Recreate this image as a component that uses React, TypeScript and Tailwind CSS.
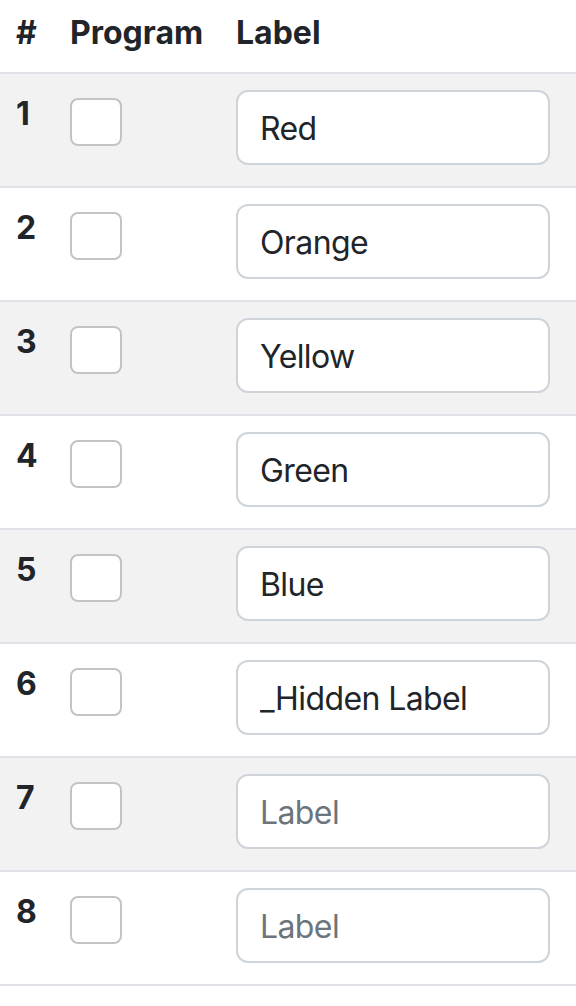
import React from "react";

const ROWS = [
  { n: 1, label: "Red" },
  { n: 2, label: "Orange" },
  { n: 3, label: "Yellow" },
  { n: 4, label: "Green" },
  { n: 5, label: "Blue" },
  { n: 6, label: "_Hidden Label" },
  { n: 7, label: "" },
  { n: 8, label: "" },
];

export default function App() {
  return (
    <div className="min-h-screen bg-white text-[#212529] text-[32px] leading-[48px]" style={{ fontFamily: "Inter, 'Liberation Sans', sans-serif" }}>
      {/* Header */}
      <div className="flex h-[74px] items-end border-b-2 border-[#dee2e6] pb-[15px] font-bold">
        <div className="w-[54px] pl-4">#</div>
        <div className="w-[166px] pl-4">Program</div>
        <div className="flex-1 pl-4">Label</div>
      </div>

      {ROWS.map((row) => (
        <div
          key={row.n}
          className={`flex h-[114px] border-b-2 border-[#dee2e6] ${row.n % 2 === 1 ? "bg-[#f2f2f2]" : "bg-white"}`}
        >
          <div className="w-[54px] pl-4 pt-4 font-bold">{row.n}</div>
          <div className="w-[166px] pl-4 pt-6">
            <input
              type="checkbox"
              className="block h-[48px] w-[52px] appearance-none rounded-[8px] border-2 border-[#c4c4c4] bg-white"
            />
          </div>
          <div className="flex-1 pl-4 pr-[26px] pt-4">
            <input
              type="text"
              defaultValue={row.label}
              placeholder="Label"
              className="block h-[75px] w-full rounded-[12px] border-2 border-[#ced4da] bg-white pl-[22px] pt-[2px] text-[32px] tracking-[-0.6px] text-[#212529] outline-none placeholder:text-[#6c757d]"
            />
          </div>
        </div>
      ))}
    </div>
  );
}
